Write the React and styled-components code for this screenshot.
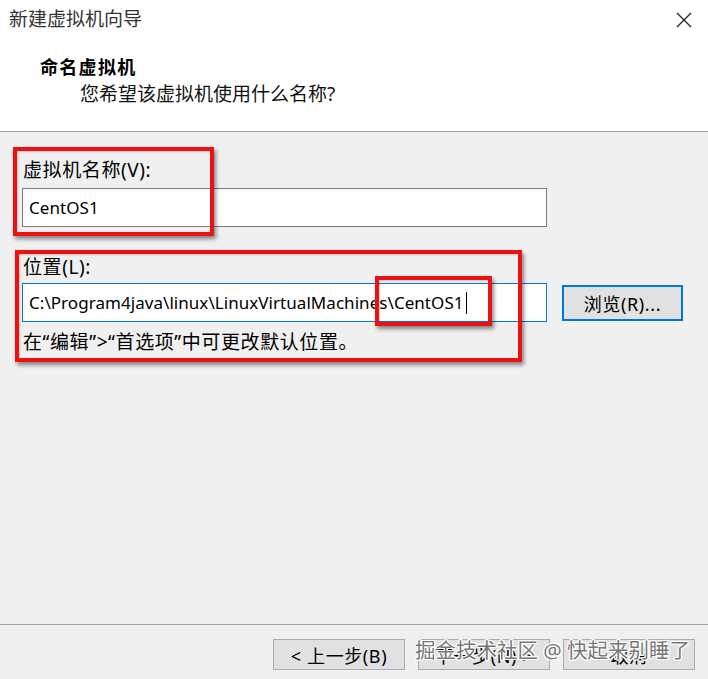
import React from "react";
import styled, { createGlobalStyle } from "styled-components";

const Global = createGlobalStyle`
  html, body { margin: 0; padding: 0; background: #f0f0f0; }
  body { font-family: "Noto Sans", "Noto Sans CJK SC", sans-serif; }
`;

const cjk = `"Noto Sans", "Noto Sans CJK SC", sans-serif`;

const Window = styled.div`
  position: relative;
  width: 708px;
  height: 679px;
  display: flex;
  flex-direction: column;
  background: #f0f0f0;
  overflow: hidden;
  font-family: ${cjk};
  color: #000;
`;

const Header = styled.div`
  height: 131px;
  background: #fff;
  border-bottom: 1px solid #a0a0a0;
  display: flex;
  flex-direction: column;
`;

const TitleBar = styled.div`
  height: 40px;
  display: flex;
  align-items: center;
  justify-content: space-between;
  padding: 0 16px 0 9px;
`;

const Title = styled.div`
  font-size: 19px;
  line-height: 24px;
  color: #333;
  margin-top: -2px;
`;

const Heading = styled.div`
  padding: 15px 0 0 40px;
  display: flex;
  flex-direction: column;
`;

const H1 = styled.div`
  font-size: 18px;
  line-height: 24px;
  font-weight: 700;
  letter-spacing: 1.3px;
`;

const Sub = styled.div`
  font-size: 19px;
  line-height: 24px;
  margin: 3px 0 0 40px;
  color: #111;
`;

const Body = styled.div`
  flex: 1;
  padding: 26px 0 0 22px;
  display: flex;
  flex-direction: column;
`;

const Label = styled.div`
  font-size: 19px;
  line-height: 24px;
  letter-spacing: 0.6px;
  padding-left: 1px;
  margin-top: ${(p) => p.$mt || 0}px;
`;

const Row = styled.div`
  display: flex;
  align-items: center;
  gap: 15px;
  margin-top: ${(p) => p.$mt || 0}px;
`;

const Input = styled.div`
  box-sizing: border-box;
  width: 525px;
  height: 39px;
  background: #fff;
  border: 1px solid ${(p) => (p.$focus ? "#0078d7" : "#7a7a7a")};
  display: flex;
  align-items: center;
  padding-left: 6px;
  font-size: 17px;
  color: #000;
  white-space: nowrap;
  letter-spacing: 0.05px;
`;

const Caret = styled.span`
  display: inline-block;
  width: 1px;
  height: 22px;
  background: #000;
  margin-left: 2px;
`;

const Button = styled.div`
  box-sizing: border-box;
  width: ${(p) => p.$w || 132}px;
  height: ${(p) => p.$h || 31}px;
  background: #e1e1e1;
  border: ${(p) => (p.$focus ? "2px solid #0078d7" : "1px solid #adadad")};
  display: flex;
  align-items: center;
  justify-content: center;
  font-size: 18px;
  letter-spacing: 0.6px;
  color: #000;
`;

const Note = styled.div`
  font-size: 19px;
  line-height: 24px;
  letter-spacing: 0.6px;
  margin-top: 8px;
  padding-left: 1px;
`;

const Footer = styled.div`
  height: 55px;
  border-top: 1px solid #a0a0a0;
  display: flex;
  justify-content: flex-end;
  gap: 13px;
  padding: 14px 13px 0 0;
  box-sizing: border-box;
`;

const Mark = styled.div`
  position: absolute;
  left: ${(p) => p.$x}px;
  top: ${(p) => p.$y}px;
  width: ${(p) => p.$w}px;
  height: ${(p) => p.$h}px;
  box-sizing: border-box;
  border: 4px solid #ee1111;
  box-shadow: 2px 3px 4px rgba(0, 0, 0, 0.45), inset 1px 1px 2px rgba(0, 0, 0, 0.2);
  pointer-events: none;
`;

const Watermark = styled.div`
  position: absolute;
  left: 415px;
  top: 636px;
  font-size: 20.5px;
  line-height: 28px;
  color: #777;
  white-space: nowrap;
  text-shadow: 1px 0 0 #fff, -1px 0 0 #fff, 0 1px 0 #fff, 0 -1px 0 #fff,
    1px 1px 0 #fff, -1px -1px 0 #fff, 1px -1px 0 #fff, -1px 1px 0 #fff;
`;

const CloseIcon = () => (
  <svg width="16" height="16" viewBox="0 0 16 16">
    <path d="M1 1 L15 15 M15 1 L1 15" stroke="#222" strokeWidth="1.3" fill="none" />
  </svg>
);

export default function App() {
  return (
    <>
      <Global />
      <Window>
        <Header>
          <TitleBar>
            <Title>新建虚拟机向导</Title>
            <CloseIcon />
          </TitleBar>
          <Heading>
            <H1>命名虚拟机</H1>
            <Sub>您希望该虚拟机使用什么名称?</Sub>
          </Heading>
        </Header>
        <Body>
          <Label>虚拟机名称(V):</Label>
          <Row $mt={6}>
            <Input>CentOS1</Input>
          </Row>
          <Label $mt={28}>位置(L):</Label>
          <Row $mt={4}>
            <Input $focus>
              C:\Program4java\linux\LinuxVirtualMachines\CentOS1
              <Caret />
            </Input>
            <Button $focus $w={121} $h={36}>浏览(R)...</Button>
          </Row>
          <Note>在“编辑”&gt;“首选项”中可更改默认位置。</Note>
        </Body>
        <Footer>
          <Button>&lt; 上一步(B)</Button>
          <Button>下一步(N) &gt;</Button>
          <Button>取消</Button>
        </Footer>
        <Mark $x={13} $y={147} $w={201} $h={89} />
        <Mark $x={15} $y={250} $w={507} $h={112} />
        <Mark $x={375} $y={276} $w={117} $h={50} />
        <Watermark>掘金技术社区 @ 快起来别睡了</Watermark>
      </Window>
    </>
  );
}
